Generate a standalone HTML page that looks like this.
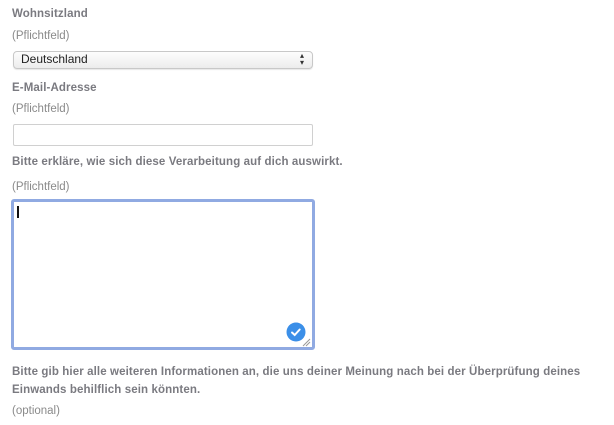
<html><head><style>
body{margin:0;width:614px;height:425px;background:#fff;font-family:"Liberation Sans",Arial,sans-serif;position:relative;overflow:hidden}
.t{position:absolute;left:12px;white-space:nowrap}
.b{font-weight:bold;font-size:11.5px;color:#7a7a80;letter-spacing:0.11px}
.n{font-size:11.5px;color:#8a8a8a}
</style></head><body>
<div class="t b" style="top:8px">Wohnsitzland</div>
<div class="t n" style="top:30px">(Pflichtfeld)</div>
<div style="position:absolute;left:13px;top:51px;width:298px;height:16px;border:1px solid #c8c8c8;border-radius:4px;background:linear-gradient(#fdfdfd,#ececec);box-shadow:0 1px 1px rgba(0,0,0,.1)"></div>
<div class="t" style="left:21px;top:52px;font-size:12px;color:#222">Deutschland</div>
<div class="t" style="left:300px;top:52px;font-size:8px;line-height:7px;color:#333">▴<br>▾</div>
<div class="t b" style="top:82px">E-Mail-Adresse</div>
<div class="t n" style="top:103px">(Pflichtfeld)</div>
<div style="position:absolute;left:13px;top:124px;width:298px;height:20px;border:1px solid #d0d0d0;border-radius:2px"></div>
<div class="t b" style="top:156px">Bitte erkläre, wie sich diese Verarbeitung auf dich auswirkt.</div>
<div class="t n" style="top:181px">(Pflichtfeld)</div>
<div style="position:absolute;left:11px;top:199px;width:298px;height:145px;border:3px solid #90aae2;border-radius:3px"></div>
<div style="position:absolute;left:17px;top:206px;width:2px;height:12px;background:#111"></div>
<svg style="position:absolute;left:286px;top:322px" width="20" height="20"><circle cx="10" cy="10" r="9.5" fill="#3b8fe8"/><path d="M6 10.5l2.7 2.5 5-5.5" stroke="#fff" stroke-width="2" fill="none" stroke-linecap="round"/></svg>
<svg style="position:absolute;left:302px;top:338px" width="9" height="9"><path d="M1 8L8 1M4 8L8 4" stroke="#999" stroke-width="1"/></svg>
<div class="t b" style="top:366px">Bitte gib hier alle weiteren Informationen an, die uns deiner Meinung nach bei der Überprüfung deines</div>
<div class="t b" style="top:384px">Einwands behilflich sein könnten.</div>
<div class="t n" style="top:405px">(optional)</div>
</body></html>
